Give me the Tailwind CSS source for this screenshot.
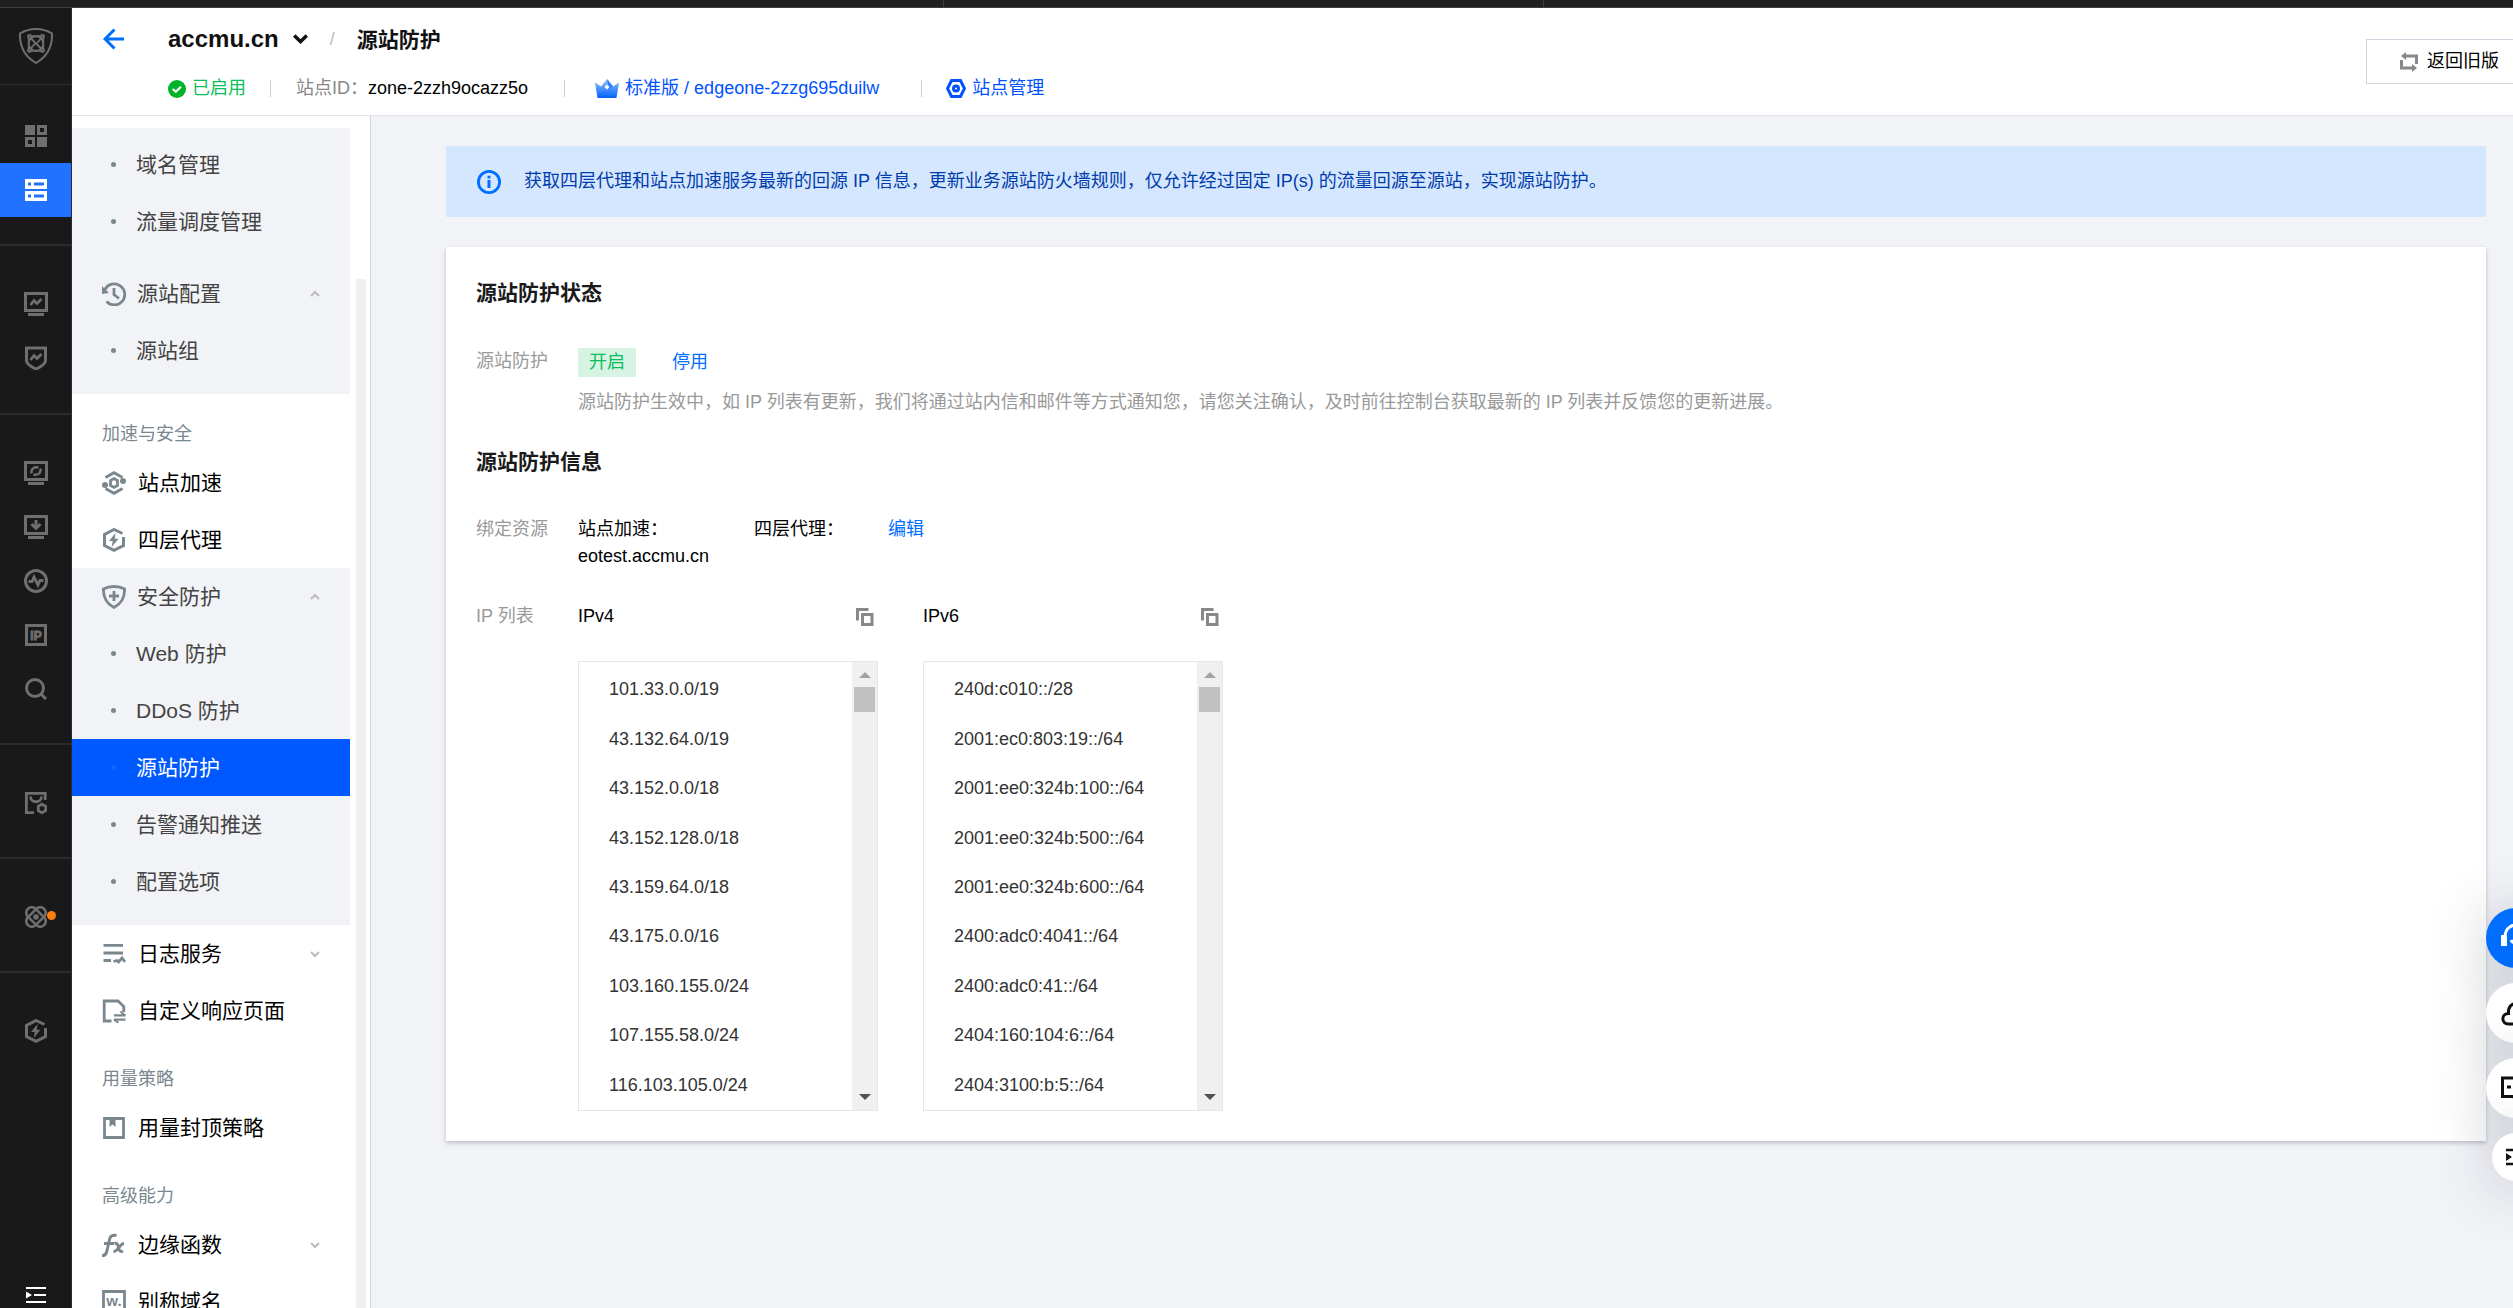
<!DOCTYPE html>
<html lang="zh-CN">
<head>
<meta charset="utf-8">
<meta name="viewport" content="width=device-width, initial-scale=1">
<title>源站防护 - accmu.cn</title>
<script src="https://cdn.jsdelivr.net/npm/@tailwindcss/browser@4"></script>
</head>
<body class="flex h-screen flex-col overflow-hidden bg-[#f2f3f7] font-['Liberation_Sans','Noto_Sans_CJK_SC',sans-serif] text-[18px] leading-[27px] text-black">

<svg class="hidden">
  <symbol id="hexbolt" viewBox="0 0 24 24"><path d="M20.500 5.500 12 1.500 2.500 6.500v11L12 22.300l9.500-4.800V9" fill="none" stroke="currentColor" stroke-width="3"/><path d="M13.500 5 7 13h3.700l-1 6 6.800-8.200h-3.700z" fill="currentColor"/></symbol>
  <symbol id="copy" viewBox="0 0 18 18"><path d="M1.500 12.500V1.500H12.500" fill="none" stroke="currentColor" stroke-width="3"/><path d="M6.500 6.500h9.500v10H6.500z" fill="none" stroke="currentColor" stroke-width="3"/></symbol>
  <symbol id="up" viewBox="0 0 10 8"><path d="M1 6 5 2l4 4" fill="none" stroke="currentColor" stroke-width="2"/></symbol>
  <symbol id="down" viewBox="0 0 10 8"><path d="M1 2l4 4 4-4" fill="none" stroke="currentColor" stroke-width="2"/></symbol>
</svg>

<div class="flex h-2 shrink-0 border-b border-[#3c3c3c] bg-[#202020]">
  <div class="w-[944px] shrink-0 border-r border-[#3c3c3c]"></div>
  <div class="w-[600px] shrink-0 border-r border-[#3c3c3c]"></div>
</div>

<div class="flex min-h-0 flex-1">
  <!-- product rail -->
  <nav aria-label="产品" class="flex w-[72px] shrink-0 flex-col border-r border-[#2b2b2b] bg-[#191919] text-[#6f6f6f]">
    <a href="#" aria-label="首页" class="flex h-[77px] items-center justify-center border-b border-[#2f2f2f]">
      <svg class="h-9 w-[34px]" viewBox="0 0 34 36" fill="none" stroke="currentColor" stroke-width="2"><path d="M17 1C23 1 28 2.500 33 5.500 33.500 18 29 28 17 35 5 28 .5 18 1 5.500 6 2.500 11 1 17 1z"/><circle cx="17" cy="15.500" r="7.300"/><path d="M9.500 8h15v15h-15z" stroke-width="1.300"/><path d="M11 9.500 23 21.500M16 15.500l-5 6M18 15l5-5.500" stroke-width="1.800"/><circle cx="10.500" cy="8.500" r="1.800" stroke-width="1.300"/><circle cx="23.500" cy="8.500" r="1.800" stroke-width="1.300"/><circle cx="10.500" cy="22.500" r="1.800" stroke-width="1.300"/><circle cx="23.500" cy="22.500" r="1.800" stroke-width="1.300"/></svg>
    </a>
    <div class="border-b-2 border-[#2b2b2b] pt-6 pb-[27px]">
      <a href="#" aria-label="概览" class="flex h-[54px] items-center justify-center"><svg class="size-[22px]" viewBox="0 0 22 22" fill="currentColor" fill-rule="evenodd"><path d="M0 0h10v10H0zM12 12h10v10H12zM12 0h10v10H12zM15 3v4h4V3zM0 12h10v10H0zM3 15v4h4v-4z"/></svg></a>
      <a href="#" aria-label="站点" class="flex h-[54px] items-center justify-center bg-[#2173ff] text-white"><svg class="size-[22px]" viewBox="0 0 22 22" fill="currentColor" fill-rule="evenodd"><path d="M0 0h22v10H0zM3 3.500v3h3v-3zM9 3.500v3h10v-3zM0 12h22v10H0zM3 15.500v3h3v-3zM9 15.500v3h10v-3z"/></svg></a>
    </div>
    <div class="border-b-2 border-[#2b2b2b] pt-[31px] pb-[28px]">
      <a href="#" aria-label="监控" class="flex h-[54px] items-center justify-center"><svg class="size-6" viewBox="0 0 24 24" fill="none" stroke="currentColor"><path d="M1.500 1.500h21v17h-21z" stroke-width="3"/><path d="M4 22.500h16" stroke-width="3"/><path d="M6.500 13l3.500-4.500 3 3 4.500-4.500" stroke-width="2.800"/></svg></a>
      <a href="#" aria-label="安全分析" class="flex h-[54px] items-center justify-center"><svg class="size-6" viewBox="0 0 24 24" fill="none" stroke="currentColor"><path d="M2.500 2h19v12.500c0 3-4 6-9.500 8.500-5.500-2.500-9.500-5.500-9.500-8.500z" stroke-width="3"/><path d="M6.500 14l3.500-4.500 3 3 4.500-4.500" stroke-width="2.800"/></svg></a>
    </div>
    <div class="border-b-2 border-[#2b2b2b] pt-[31px] pb-[27px]">
      <a href="#" aria-label="刷新" class="flex h-[54px] items-center justify-center"><svg class="size-6" viewBox="0 0 24 24" fill="none" stroke="currentColor"><path d="M1.500 1.500h21v17h-21z" stroke-width="3"/><path d="M4 22.500h16" stroke-width="3"/><path d="M7.500 12.500C6.800 8 10 5.500 14.500 6.500M16.500 7.500c.7 4.500-2.500 7-7 6" stroke-width="2.400"/></svg></a>
      <a href="#" aria-label="下载" class="flex h-[54px] items-center justify-center"><svg class="size-6" viewBox="0 0 24 24" fill="none" stroke="currentColor"><path d="M1.500 1.500h21v17h-21z" stroke-width="3"/><path d="M4 22.500h16" stroke-width="3"/><path d="M12 5v8M7.500 9 12 13.500 16.500 9" stroke-width="3"/></svg></a>
      <a href="#" aria-label="诊断" class="flex h-[54px] items-center justify-center"><svg class="size-6" viewBox="0 0 24 24" fill="none" stroke="currentColor"><circle cx="12" cy="12" r="10.500" stroke-width="3"/><path d="M4.500 12.500H8l2-4.500 4 8 2-4.500h3.500" stroke-width="2.800"/></svg></a>
      <a href="#" aria-label="IP 查询" class="flex h-[54px] items-center justify-center"><svg class="size-[22px]" viewBox="0 0 22 22"><path d="M1.500 1.500h19v19h-19z" fill="none" stroke="currentColor" stroke-width="3"/><text x="11" y="15.500" text-anchor="middle" font-size="12" font-weight="900" fill="currentColor" stroke="currentColor" stroke-width=".8">IP</text></svg></a>
      <a href="#" aria-label="搜索" class="flex h-[54px] items-center justify-center"><svg class="size-[22px]" viewBox="0 0 22 22" fill="none" stroke="currentColor" stroke-width="3"><circle cx="10" cy="10" r="8.500"/><path d="M15.500 15.500l5.500 5.500"/></svg></a>
    </div>
    <div class="border-b-2 border-[#2b2b2b] pt-[31px] pb-[27px]">
      <a href="#" aria-label="规则" class="flex h-[54px] items-center justify-center"><svg class="size-[22px]" viewBox="0 0 22 22" fill="none" stroke="currentColor" stroke-width="2.800"><path d="M20.200 8V1.400H1.400v19.200H9"/><path d="M5.500 4.500c0 7 11 7 11 0"/><path d="M17 12.200l3.700 2.100v4.400L17 20.800l-3.700-2.100v-4.400z"/></svg></a>
    </div>
    <div class="border-b-2 border-[#2b2b2b] pt-[31px] pb-[27px]">
      <a href="#" aria-label="实验室" class="relative flex h-[54px] items-center justify-center"><svg class="size-[22px]" viewBox="0 0 22 22" fill="none" stroke="currentColor" stroke-width="2.600"><rect x="5.500" y="-.5" width="11" height="23" rx="5.500" transform="rotate(45 11 11)"/><rect x="5.500" y="-.5" width="11" height="23" rx="5.500" transform="rotate(-45 11 11)"/><circle cx="11" cy="11" r="1.500" fill="currentColor"/></svg><span class="absolute top-[21px] left-[47px] size-[9px] rounded-full bg-[#ff7d0a]"></span></a>
    </div>
    <div class="pt-[31px]">
      <a href="#" aria-label="边缘加速" class="flex h-[54px] items-center justify-center"><svg class="size-6"><use href="#hexbolt"/></svg></a>
    </div>
    <button type="button" aria-label="展开菜单" class="mt-auto mb-1 flex h-[18px] items-center justify-center text-white"><svg class="h-4 w-5" viewBox="0 0 20 16"><path d="M0 1h20M8 8h12M0 15h20" stroke="currentColor" stroke-width="2"/><path d="M0 4.500 6 8l-6 3.500z" fill="currentColor"/></svg></button>
  </nav>

  <div class="flex min-w-0 flex-1 flex-col">
    <header class="flex h-[108px] shrink-0 items-start overflow-hidden border-b border-[#e4e6ec] bg-white">
      <a href="#" aria-label="返回" class="mt-5 ml-[31px] text-[#006eff]"><svg class="h-[22px] w-[21px]" viewBox="0 0 21 22" fill="none" stroke="currentColor" stroke-width="3"><path d="M21 11H2.500M11.500 1.500 2 11l9.500 9.500"/></svg></a>
      <div class="ml-[44px] flex-1 pt-[15px]">
        <div class="flex h-8 items-center">
          <button type="button" class="flex items-center gap-[14px] text-[24px] leading-8 font-bold text-[#111]">accmu.cn<svg class="h-[10px] w-[15px]" viewBox="0 0 15 10" fill="none" stroke="currentColor" stroke-width="3.500"><path d="M1.200 1.500l6.300 6 6.300-6"/></svg></button>
          <span class="ml-[22px] text-[#bbb]">/</span>
          <h1 class="ml-[22px] text-[21px] font-bold text-[#111]">源站防护</h1>
        </div>
        <div class="mt-5 flex items-center whitespace-nowrap">
          <svg class="size-[18px]" viewBox="0 0 18 18"><circle cx="9" cy="9" r="9" fill="#00b42a"/><path d="M4.800 9l3 2.800 5.200-5" fill="none" stroke="#fff" stroke-width="2.200"/></svg>
          <span class="ml-[6px] text-[#0abf5b]">已启用</span>
          <span class="ml-[24px] h-[17px] w-px bg-[#d0d0d0]"></span>
          <span class="ml-[25px] text-[#888]">站点ID：</span>
          <span>zone-2zzh9ocazz5o</span>
          <span class="ml-[36px] h-[17px] w-px bg-[#d0d0d0]"></span>
          <a href="#" class="ml-[30px] flex items-center gap-[6px] text-[#0052ff]"><svg class="h-[19px] w-6" viewBox="0 0 24 19"><defs><linearGradient id="crown" x1="0" y1="0" x2="0" y2="1"><stop offset="0" stop-color="#9cc8ff"/><stop offset=".5" stop-color="#4c94ff"/><stop offset="1" stop-color="#0062ff"/></linearGradient></defs><path d="M0 3.500 6 7.500 12 0l6 7.500 6-4L21.500 19h-19z" fill="url(#crown)"/><path d="M12 0l6 7.500-4 3.500z" fill="#2b80ff"/><path d="M12 5.500l2.500 2.500-2.500 2.500L9.500 8z" fill="#fff"/></svg>标准版 / edgeone-2zzg695duilw</a>
          <span class="ml-[42px] h-[17px] w-px bg-[#d0d0d0]"></span>
          <a href="#" class="ml-6 flex items-center gap-[6px] text-[#0052ff]"><svg class="h-[19px] w-5" viewBox="0 0 20 19" fill="none" stroke="currentColor" stroke-width="3"><path d="M5.500 1.500h9l4 8-4 8h-9l-4-8z"/><circle cx="10" cy="9.500" r="2.500"/></svg>站点管理</a>
        </div>
      </div>
      <button type="button" class="mt-[31px] -mr-[10px] flex h-[45px] w-[157px] shrink-0 items-center gap-2 border border-[#cfd5de] pl-[32px]"><svg class="size-5 text-[#888]" viewBox="0 0 20 20" fill="none" stroke="currentColor" stroke-width="3"><path d="M17.500 12V4H6M2.500 8v8H14"/><path d="M7 0v8L2 4zM13 12v8l5-4z" fill="currentColor" stroke="none"/></svg>返回旧版</button>
    </header>

    <div class="flex min-h-0 flex-1">
      <!-- site menu -->
      <aside class="flex w-[299px] shrink-0 overflow-hidden border-r border-[#cfd5de] bg-white pt-3 text-[21px]">
        <nav aria-label="站点菜单" class="w-[278px] shrink-0">
          <div class="bg-[#f2f3f7] pt-[8px] pb-[15px] text-[#444]">
            <a href="#" class="flex h-[57px] items-center pl-[39px]"><span class="mr-5 size-[5px] rounded-full bg-[#7a878f]"></span>域名管理</a>
            <a href="#" class="flex h-[57px] items-center pl-[39px]"><span class="mr-5 size-[5px] rounded-full bg-[#7a878f]"></span>流量调度管理</a>
            <button type="button" class="mt-[15px] flex h-[57px] w-full items-center pr-[30px] pl-[30px]"><svg class="mr-[11px] size-6 text-[#7a878f]" viewBox="0 0 24 24" fill="none" stroke="currentColor" stroke-width="2.800"><path d="M3 7.500A10.500 10.500 0 1 1 4.500 19.500"/><path d="M0 4v8l7-1z" fill="currentColor" stroke="none"/><path d="M12 6v6.500l5 4"/></svg>源站配置<svg class="ml-auto h-2 w-[10px] text-[#bbb]"><use href="#up"/></svg></button>
            <a href="#" class="flex h-[57px] items-center pl-[39px]"><span class="mr-5 size-[5px] rounded-full bg-[#7a878f]"></span>源站组</a>
          </div>
          <h2 class="flex h-[60px] items-center pt-5 pl-[30px] text-[18px] text-[#7a878f]">加速与安全</h2>
          <a href="#" class="flex h-[57px] items-center pl-[30px]"><svg class="mr-3 size-6 text-[#7a878f]" viewBox="0 0 24 24" fill="none" stroke="currentColor" stroke-width="2.800"><path d="M3.500 6.500 12 1.700l8.500 4.800M3.500 17.500 12 22.300l8.500-4.800"/><path d="M12 7.500l3.500 2v5L12 16.500l-3.500-2v-5z"/><circle cx="3" cy="14" r="3" fill="currentColor" stroke="none"/><circle cx="21" cy="10" r="3" fill="currentColor" stroke="none"/></svg>站点加速</a>
          <a href="#" class="flex h-[57px] items-center pl-[30px]"><svg class="mr-3 size-6 text-[#7a878f]"><use href="#hexbolt"/></svg>四层代理</a>
          <div class="bg-[#f2f3f7] pb-[15px] text-[#444]">
            <button type="button" class="flex h-[57px] w-full items-center pr-[30px] pl-[30px]"><svg class="mr-[11px] size-6 text-[#7a878f]" viewBox="0 0 24 24" fill="none" stroke="currentColor" stroke-width="2.800"><path d="M12 1.500c4 0 7.500.8 10.600 2.500C22.800 13 19 19 12 22.500 5 19 1.200 13 1.400 4 4.500 2.300 8 1.500 12 1.500z"/><path d="M12 6v10M7 11h10"/></svg>安全防护<svg class="ml-auto h-2 w-[10px] text-[#bbb]"><use href="#up"/></svg></button>
            <a href="#" class="flex h-[57px] items-center pl-[39px]"><span class="mr-5 size-[5px] rounded-full bg-[#7a878f]"></span>Web 防护</a>
            <a href="#" class="flex h-[57px] items-center pl-[39px]"><span class="mr-5 size-[5px] rounded-full bg-[#7a878f]"></span>DDoS 防护</a>
            <a href="#" aria-current="page" class="flex h-[57px] items-center bg-[#0058ff] pl-[39px] text-white"><span class="mr-5 size-[5px] rounded-full bg-[#006eff]"></span>源站防护</a>
            <a href="#" class="flex h-[57px] items-center pl-[39px]"><span class="mr-5 size-[5px] rounded-full bg-[#7a878f]"></span>告警通知推送</a>
            <a href="#" class="flex h-[57px] items-center pl-[39px]"><span class="mr-5 size-[5px] rounded-full bg-[#7a878f]"></span>配置选项</a>
          </div>
          <button type="button" class="flex h-[57px] w-full items-center pr-[30px] pl-[30px]"><svg class="mr-3 size-6 text-[#7a878f]" viewBox="0 0 24 24" fill="none" stroke="currentColor" stroke-width="2.800"><path d="M1.500 3.300H21M1.500 11H21M1.500 18.500H9M11.500 19.500l3.500-1 1.500 1.500 3.500-4 3 4"/></svg>日志服务<svg class="ml-auto h-2 w-[10px] text-[#bbb]"><use href="#down"/></svg></button>
          <a href="#" class="flex h-[57px] items-center pl-[30px]"><svg class="mr-3 size-6 text-[#7a878f]" viewBox="0 0 24 24" fill="none" stroke="currentColor" stroke-width="2.800"><path d="M9.500 22H2.200V2H16l5.800 5.500v5.500"/><path d="M12 16.300h11.500M12 20.700h11.500" stroke-width="2.200"/><path d="M18.500 12.500 23 16.500M16.500 24 12 20.500" stroke-width="2"/></svg>自定义响应页面</a>
          <h2 class="flex h-[60px] items-center pt-5 pl-[30px] text-[18px] text-[#7a878f]">用量策略</h2>
          <a href="#" class="flex h-[57px] items-center pl-[30px]"><svg class="mr-3 size-6 text-[#7a878f]" viewBox="0 0 24 24"><path d="M2.500 2.500h19v19h-19z" fill="none" stroke="currentColor" stroke-width="2.800"/><path d="M7.500 2h6v9l-3-2.500-3 2.500z" fill="currentColor"/></svg>用量封顶策略</a>
          <h2 class="flex h-[60px] items-center pt-5 pl-[30px] text-[18px] text-[#7a878f]">高级能力</h2>
          <button type="button" class="flex h-[57px] w-full items-center pr-[30px] pl-[30px]"><svg class="mr-3 size-6 text-[#7a878f]" viewBox="0 0 24 24"><g fill="none" stroke="currentColor" stroke-width="3"><path d="M0 22.500c3 .5 4-1 4.800-4L7.500 6.500C8.300 3 10 1.800 14.500 2.500M2 10.500h10"/><path d="M12.500 10.500c3-1 3 1 4 4s1.500 5 4.500 3.500M22 10.500c-4 0-6 8-10.500 8"/></g></svg>边缘函数<svg class="ml-auto h-2 w-[10px] text-[#bbb]"><use href="#down"/></svg></button>
          <a href="#" class="flex h-[57px] items-center pl-[30px]"><svg class="mr-3 size-6 text-[#7a878f]" viewBox="0 0 24 24"><path d="M1.500 1.500h21v21h-21z" fill="none" stroke="currentColor" stroke-width="2.800"/><text x="12" y="16" text-anchor="middle" font-size="15" font-weight="900" fill="currentColor">w.</text></svg>别称域名</a>
        </nav>
        <div class="mt-[151px] ml-[6px] h-[1100px] w-[10px] shrink-0 bg-[#f0f0f0]"></div>
      </aside>

      <main class="min-w-0 flex-1 pt-[30px] pr-[27px] pl-[75px]">
        <div role="status" class="flex h-[71px] items-center bg-[#d5e7ff] pl-[31px] text-[#003cab]">
          <svg class="mr-[23px] size-6 text-[#006eff]" viewBox="0 0 24 24" fill="none" stroke="currentColor" stroke-width="2.800"><circle cx="12" cy="12" r="10.600"/><path d="M12 10v8M12 5.800v2.600" stroke-width="3"/></svg>
          <p>获取四层代理和站点加速服务最新的回源 IP 信息，更新业务源站防火墙规则，仅允许经过固定 IP(s) 的流量回源至源站，实现源站防护。</p>
        </div>

        <section class="mt-[30px] bg-white p-[30px] shadow-[0_2px_4px_rgba(54,58,80,0.28)]">
          <h2 class="text-[21px] leading-8 font-bold text-[#1a1a1a]">源站防护状态</h2>
          <div class="mt-[39px] flex">
            <div class="w-[102px] shrink-0 text-[#999]">源站防护</div>
            <div>
              <div class="flex items-center">
                <span class="bg-[#d6f3e3] px-[11px] py-px text-[#0abf5b]">开启</span>
                <a href="#" class="ml-[36px] text-[#006eff]">停用</a>
              </div>
              <p class="mt-[12px] text-[#999]">源站防护生效中，如 IP 列表有更新，我们将通过站内信和邮件等方式通知您，请您关注确认，及时前往控制台获取最新的 IP 列表并反馈您的更新进展。</p>
            </div>
          </div>
          <h2 class="mt-[30px] text-[21px] leading-8 font-bold text-[#1a1a1a]">源站防护信息</h2>
          <div class="mt-[38px] flex">
            <div class="w-[102px] shrink-0 text-[#999]">绑定资源</div>
            <div class="w-[176px]">站点加速：<br>eotest.accmu.cn</div>
            <div class="w-[134px]">四层代理：</div>
            <a href="#" class="text-[#006eff]">编辑</a>
          </div>
          <div class="mt-[33px] flex">
            <div class="w-[102px] shrink-0 text-[#999]">IP 列表</div>
            <div class="w-[300px]">
              <div class="flex items-center justify-between pr-[4px]"><h3>IPv4</h3><button type="button" aria-label="复制 IPv4" class="text-[#888]"><svg class="size-[18px]"><use href="#copy"/></svg></button></div>
              <div class="mt-[31px] flex h-[450px] border border-[#e4e6ec]">
                <ul class="flex flex-1 flex-col pt-[3px] pl-[30px] text-[#333]">
                  <li class="flex flex-1 items-center">101.33.0.0/19</li><li class="flex flex-1 items-center">43.132.64.0/19</li><li class="flex flex-1 items-center">43.152.0.0/18</li><li class="flex flex-1 items-center">43.152.128.0/18</li><li class="flex flex-1 items-center">43.159.64.0/18</li><li class="flex flex-1 items-center">43.175.0.0/16</li><li class="flex flex-1 items-center">103.160.155.0/24</li><li class="flex flex-1 items-center">107.155.58.0/24</li><li class="flex flex-1 items-center">116.103.105.0/24</li>
                </ul>
                <div class="flex w-[25px] flex-col items-center bg-[#f0f0f0]"><svg class="mt-[10px] h-[6px] w-3 text-[#a3a3a3]" viewBox="0 0 12 6"><path d="M0 6l6-6 6 6z" fill="currentColor"/></svg><div class="mt-[9px] h-[25px] w-[21px] bg-[#c1c1c1]"></div><svg class="mt-auto mb-[10px] h-[6px] w-3 text-[#505050]" viewBox="0 0 12 6"><path d="M0 0h12L6 6z" fill="currentColor"/></svg></div>
              </div>
            </div>
            <div class="ml-[45px] w-[300px]">
              <div class="flex items-center justify-between pr-[4px]"><h3>IPv6</h3><button type="button" aria-label="复制 IPv6" class="text-[#888]"><svg class="size-[18px]"><use href="#copy"/></svg></button></div>
              <div class="mt-[31px] flex h-[450px] border border-[#e4e6ec]">
                <ul class="flex flex-1 flex-col pt-[3px] pl-[30px] text-[#333]">
                  <li class="flex flex-1 items-center">240d:c010::/28</li><li class="flex flex-1 items-center">2001:ec0:803:19::/64</li><li class="flex flex-1 items-center">2001:ee0:324b:100::/64</li><li class="flex flex-1 items-center">2001:ee0:324b:500::/64</li><li class="flex flex-1 items-center">2001:ee0:324b:600::/64</li><li class="flex flex-1 items-center">2400:adc0:4041::/64</li><li class="flex flex-1 items-center">2400:adc0:41::/64</li><li class="flex flex-1 items-center">2404:160:104:6::/64</li><li class="flex flex-1 items-center">2404:3100:b:5::/64</li>
                </ul>
                <div class="flex w-[25px] flex-col items-center bg-[#f0f0f0]"><svg class="mt-[10px] h-[6px] w-3 text-[#a3a3a3]" viewBox="0 0 12 6"><path d="M0 6l6-6 6 6z" fill="currentColor"/></svg><div class="mt-[9px] h-[25px] w-[21px] bg-[#c1c1c1]"></div><svg class="mt-auto mb-[10px] h-[6px] w-3 text-[#505050]" viewBox="0 0 12 6"><path d="M0 0h12L6 6z" fill="currentColor"/></svg></div>
              </div>
            </div>
          </div>
        </section>
      </main>
    </div>
  </div>
</div>

<!-- floating help buttons, half outside the window -->
<div class="fixed -right-[33px] bottom-[127px] flex flex-col items-center gap-[15px] text-[#111]">
  <button type="button" aria-label="在线客服" class="flex size-[60px] items-center justify-center rounded-full bg-[#006eff] text-white shadow-[0_6px_60px_rgba(54,58,80,0.32)]"><svg class="size-[30px]" viewBox="0 0 30 30" fill="none" stroke="currentColor" stroke-width="3"><path d="M4 14C4 -2 26 -2 26 14"/><path d="M0 12h6v11H0zM24 12h6v11h-6z" fill="currentColor" stroke="none"/><path d="M10 17c1.500 4 8.500 4 10 0"/></svg></button>
  <button type="button" aria-label="云助手" class="flex size-[60px] items-center justify-center rounded-full bg-white shadow-[0_6px_60px_rgba(54,58,80,0.32)]"><svg class="size-[30px]" viewBox="0 0 30 30" fill="none" stroke="currentColor" stroke-width="3"><path d="M7.500 26C0 26 0 15.500 7.500 15.500 6 2 24 2 22.500 15.500 30 15.500 30 26 22.500 26z"/></svg></button>
  <button type="button" aria-label="反馈" class="flex size-[60px] items-center justify-center rounded-full bg-white shadow-[0_6px_60px_rgba(54,58,80,0.32)]"><svg class="size-[30px]" viewBox="0 0 30 30" fill="none" stroke="currentColor" stroke-width="3"><path d="M12 5H1.500v18.500H12l3 3 3-3h10.500V5z"/><path d="M6 14h4M13 14h4M20 14h4"/></svg></button>
  <button type="button" aria-label="收起" class="flex size-12 items-center justify-center rounded-full bg-white shadow-[0_6px_60px_rgba(54,58,80,0.32)]"><svg class="h-[18px] w-5" viewBox="0 0 20 18"><path d="M0 2h20M8 9h12M0 16h20" stroke="currentColor" stroke-width="2.600"/><path d="M0 5l6 4-6 4z" fill="currentColor"/></svg></button>
</div>
</body>
</html>
